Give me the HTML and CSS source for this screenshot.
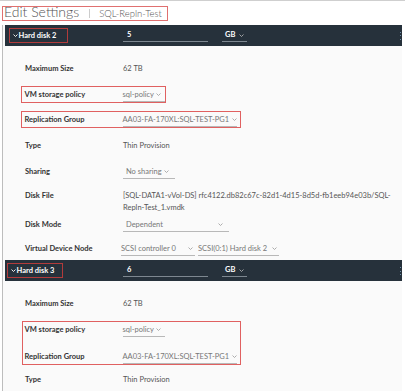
FILE: index.html
```html
<!DOCTYPE html>
<html lang="en">
<head>
    <meta charset="UTF-8">
    <title>Edit Settings</title>
    <link rel="stylesheet" href="styles.css">
</head>
<body>
    <div class="title">
        <span class="title-box">
            <span class="title-main">Edit Settings</span>
            <span class="sep"></span>
            <span class="title-vm">SQL-Repln-Test</span>
        </span>
    </div>

    <div class="panel">
        <div class="disk-bar">
            <span class="disk-name"><svg class="chev" width="5" height="3" viewBox="0 0 5 3"><polyline points="0.5,0.5 2.5,2.5 4.5,0.5" fill="none" stroke="#fff" stroke-width="0.9"/></svg>Hard disk 2</span>
            <span class="size-input">5</span>
            <span class="unit">GB <svg width="5" height="3" viewBox="0 0 5 3"><polyline points="0.5,0.5 2.5,2.5 4.5,0.5" fill="none" stroke="#bbb" stroke-width="0.8"/></svg></span>
            <span class="kebab"></span>
        </div>
        <div class="rows">
            <div class="row"><span class="label">Maximum Size</span><span class="value">62 TB</span></div>
            <div class="row">
                <span class="pair pair-policy">
                    <span class="label">VM storage policy</span>
                    <span class="select sel-policy">sql-policy <svg width="5" height="3" viewBox="0 0 5 3"><polyline points="0.5,0.5 2.5,2.5 4.5,0.5" fill="none" stroke="#999" stroke-width="0.8"/></svg></span>
                </span>
            </div>
            <div class="row row-short">
                <span class="pair">
                    <span class="label">Replication Group</span>
                    <span class="select sel-group">AA03-FA-170XL:SQL-TEST-PG1 <svg width="5" height="3" viewBox="0 0 5 3"><polyline points="0.5,0.5 2.5,2.5 4.5,0.5" fill="none" stroke="#999" stroke-width="0.8"/></svg></span>
                </span>
            </div>
            <div class="row"><span class="label">Type</span><span class="value">Thin Provision</span></div>
            <div class="row">
                <span class="label">Sharing</span>
                <span class="select sel-sharing">No sharing <svg width="5" height="3" viewBox="0 0 5 3"><polyline points="0.5,0.5 2.5,2.5 4.5,0.5" fill="none" stroke="#999" stroke-width="0.8"/></svg></span>
            </div>
            <div class="row row-file">
                <span class="label">Disk File</span>
                <span class="value file">[SQL-DATA1-vVol-DS] rfc4122.db82c67c-82d1-4d15-8d5d-fb1eeb94e03b/SQL-<br>Repln-Test_1.vmdk</span>
            </div>
            <div class="row row-tight">
                <span class="label">Disk Mode</span>
                <span class="select sel-mode">Dependent <svg width="5" height="3" viewBox="0 0 5 3"><polyline points="0.5,0.5 2.5,2.5 4.5,0.5" fill="none" stroke="#999" stroke-width="0.8"/></svg></span>
            </div>
            <div class="row row-tight">
                <span class="label">Virtual Device Node</span>
                <span class="select sel-ctrl">SCSI controller 0 <svg width="5" height="3" viewBox="0 0 5 3"><polyline points="0.5,0.5 2.5,2.5 4.5,0.5" fill="none" stroke="#999" stroke-width="0.8"/></svg></span>
                <span class="select sel-node">SCSI(0:1) Hard disk 2 <svg width="5" height="3" viewBox="0 0 5 3"><polyline points="0.5,0.5 2.5,2.5 4.5,0.5" fill="none" stroke="#999" stroke-width="0.8"/></svg></span>
            </div>
        </div>

        <div class="disk-bar">
            <span class="disk-name disk-name-3"><svg class="chev" width="5" height="3" viewBox="0 0 5 3"><polyline points="0.5,0.5 2.5,2.5 4.5,0.5" fill="none" stroke="#fff" stroke-width="0.9"/></svg>Hard disk 3</span>
            <span class="size-input">6</span>
            <span class="unit">GB <svg width="5" height="3" viewBox="0 0 5 3"><polyline points="0.5,0.5 2.5,2.5 4.5,0.5" fill="none" stroke="#bbb" stroke-width="0.8"/></svg></span>
            <span class="kebab"></span>
        </div>
        <div class="rows">
            <div class="row"><span class="label">Maximum Size</span><span class="value">62 TB</span></div>
            <div class="group-mark">
                <div class="row row-in">
                    <span class="label">VM storage policy</span>
                    <span class="select sel-policy">sql-policy <svg width="5" height="3" viewBox="0 0 5 3"><polyline points="0.5,0.5 2.5,2.5 4.5,0.5" fill="none" stroke="#999" stroke-width="0.8"/></svg></span>
                </div>
                <div class="row row-in">
                    <span class="label">Replication Group</span>
                    <span class="select sel-group">AA03-FA-170XL:SQL-TEST-PG1 <svg width="5" height="3" viewBox="0 0 5 3"><polyline points="0.5,0.5 2.5,2.5 4.5,0.5" fill="none" stroke="#999" stroke-width="0.8"/></svg></span>
                </div>
            </div>
            <div class="row row-last"><span class="label">Type</span><span class="value">Thin Provision</span></div>
        </div>
    </div>
</body>
</html>
```

FILE: styles.css
```css
html, body {
    overflow: hidden;
}
body {
    margin: 0;
    background: #fff;
    font-family: Lato, "Liberation Sans", sans-serif;
}
.title {
    height: 24px;
    border-top: 1px solid #cfcfcf;
}
.title-box {
    display: inline-flex;
    align-items: center;
    height: 13px;
    margin-left: 2px;
    padding: 0 5px 0 1px;
    border: 1.5px solid #e07070;
    border-top-width: 1px;
}
.title-main {
    font-size: 14px;
    font-weight: 300;
    color: #555;
    margin-top: -3px;
}
.sep {
    width: 1px;
    height: 9px;
    background: #ccc;
    margin: 0 9px 0 10px;
}
.title-vm {
    font-size: 9.5px;
    font-weight: 300;
    color: #555;
}
.panel {
    margin-left: 2px;
    width: 397px;
    padding-left: 2px;
    border-left: 1px solid #bdbdbd;
    background: #fafafa;
}
.disk-bar {
    display: flex;
    align-items: center;
    height: 21px;
    padding-left: 4px;
    background: #26313b;
    color: #fff;
    font-size: 7.5px;
}
.disk-name {
    display: flex;
    align-items: center;
    box-sizing: border-box;
    width: 59px;
    height: 15px;
    padding-left: 2.5px;
    border: 1.5px solid #b23b3b;
    font-weight: bold;
}
.disk-name-3 {
    width: 56px;
    margin-left: -2px;
    margin-right: 5px;
}
.chev {
    margin-right: 1px;
}
.size-input {
    box-sizing: border-box;
    width: 85px;
    margin-left: 55px;
    padding: 0 0 2px 4px;
    border-bottom: 1px solid #7d8790;
    font-weight: bold;
}
.unit {
    box-sizing: border-box;
    width: 25px;
    margin-left: 14px;
    padding: 0 0 2px 3px;
    border-bottom: 1px solid #7d8790;
    font-weight: bold;
}
.unit svg {
    margin-left: 2px;
}
.kebab {
    margin-left: auto;
    width: 1px;
    height: 8px;
    margin-right: 1px;
    background: repeating-linear-gradient(#6d8ea8 0 1px, transparent 1px 3.5px);
}
.rows {
    padding: 9px 0 0 20px;
}
.row {
    display: flex;
    align-items: center;
    height: 26px;
    font-size: 7.5px;
    white-space: nowrap;
}
.row-short {
    height: 25px;
}
.row-tight {
    height: 24px;
}
.row-file {
    height: 28px;
    align-items: flex-start;
    padding-top: 6px;
    box-sizing: border-box;
    line-height: 12px;
}
.label {
    width: 98px;
    flex-shrink: 0;
    font-weight: bold;
    color: #333;
}
.value {
    color: #555;
}
.pair {
    display: flex;
    align-items: center;
    height: 15px;
    margin-left: -4px;
    padding: 0 3px 0 2.5px;
    border: 1.5px solid #e06060;
}
.pair-policy {
    padding-right: 0;
}
.select {
    display: inline-flex;
    align-items: center;
    box-sizing: border-box;
    padding: 0 0 2px 0;
    border-bottom: 1px solid #b8b8b8;
    color: #777;
    margin-top: 3px;
}
.select svg {
    flex-shrink: 0;
    margin-left: 2px;
}
.sel-policy {
    width: 42px;
}
.sel-group {
    width: 114px;
    justify-content: space-between;
}
.sel-sharing {
    width: 52px;
    padding-left: 3px;
}
.sel-mode {
    width: 106px;
    padding-left: 3px;
    justify-content: space-between;
    padding-right: 6px;
}
.sel-ctrl {
    margin-left: -2px;
    width: 74px;
    justify-content: space-between;
    padding-right: 2px;
}
.sel-node {
    margin-left: 3px;
    width: 81px;
    justify-content: space-between;
    padding-right: 2px;
}
.group-mark {
    display: flex;
    flex-direction: column;
    width: fit-content;
    margin: 5px 0 0 -3px;
    padding: 0 3px 0 1.5px;
    border: 1.5px solid #e06060;
}
.row-in {
    height: 15px;
}
.row-in + .row-in {
    margin-top: 12px;
}
.row-last {
    margin-top: 1px;
}
```
